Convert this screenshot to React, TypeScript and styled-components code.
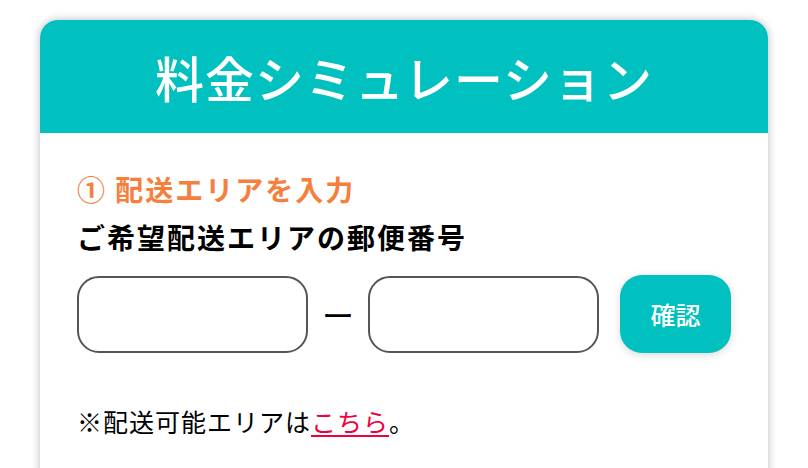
import React from 'react';
import styled, { createGlobalStyle } from 'styled-components';

const GlobalStyle = createGlobalStyle`
	html, body {
		margin: 0;
		padding: 0;
		background: #fff;
	}
	body {
		font-family: 'Noto Sans CJK JP', 'Noto Sans', sans-serif;
		color: #000;
	}
`;

const Page = styled.div`
	padding: 20px 40px 0;
`;

const Card = styled.section`
	width: 728px;
	background: #fff;
	border-radius: 18px 18px 0 0;
	box-shadow: 0 0 8px rgba( 0, 0, 0, 0.28 );
	overflow: hidden;
	height: 460px;
`;

const Header = styled.header`
	height: 113px;
	background: #00c0c0;
	display: flex;
	align-items: center;
	justify-content: center;
`;

const Title = styled.h1`
	margin: 0;
	color: #fff;
	font-size: 49px;
	font-weight: 500;
	letter-spacing: 1px;
	line-height: 1;
`;

const Body = styled.div`
	padding: 36px 37px 0;
`;

const StepTitle = styled.h2`
	margin: 0;
	color: #f5803e;
	font-size: 28px;
	font-weight: 700;
	line-height: 40px;
	letter-spacing: 2px;
`;

const FieldLabel = styled.h3`
	margin: 8px 0 0;
	font-size: 28px;
	font-weight: 700;
	line-height: 40px;
	letter-spacing: 2px;
`;

const ZipRow = styled.div`
	display: flex;
	align-items: center;
	margin-top: 18px;
`;

const ZipInput = styled.input`
	box-sizing: border-box;
	width: 231px;
	height: 77px;
	border: 2px solid #555;
	border-radius: 22px;
	background: #fff;
	font-size: 24px;
	padding: 0 16px;
	outline: none;
`;

const Dash = styled.span`
	width: 61px;
	text-align: center;
	font-size: 32px;
	font-weight: 400;
	line-height: 1;
`;

const ConfirmButton = styled.button`
	margin-left: 21px;
	width: 113px;
	height: 78px;
	border: none;
	border-radius: 22px;
	background: #00c0c0;
	color: #fff;
	font-family: inherit;
	font-size: 25px;
	font-weight: 500;
	box-shadow: 0 2px 8px rgba( 0, 0, 0, 0.15 );
	cursor: pointer;
`;

const Note = styled.p`
	margin: 50px 0 0;
	font-size: 25px;
	line-height: 36px;
	letter-spacing: 1px;
`;

const NoteLink = styled.a`
	color: #f0003c;
	text-decoration: underline;
	text-underline-offset: 3px;
`;

export default function App() {
	return (
		<>
			<GlobalStyle />
			<Page>
				<Card>
					<Header>
						<Title>料金シミュレーション</Title>
					</Header>
					<Body>
						<StepTitle>① 配送エリアを入力</StepTitle>
						<FieldLabel>ご希望配送エリアの郵便番号</FieldLabel>
						<ZipRow>
							<ZipInput type="text" aria-label="郵便番号（前半）" />
							<Dash>ー</Dash>
							<ZipInput type="text" aria-label="郵便番号（後半）" />
							<ConfirmButton type="button">確認</ConfirmButton>
						</ZipRow>
						<Note>
							※配送可能エリアは<NoteLink href="#">こちら</NoteLink>。
						</Note>
					</Body>
				</Card>
			</Page>
		</>
	);
}
